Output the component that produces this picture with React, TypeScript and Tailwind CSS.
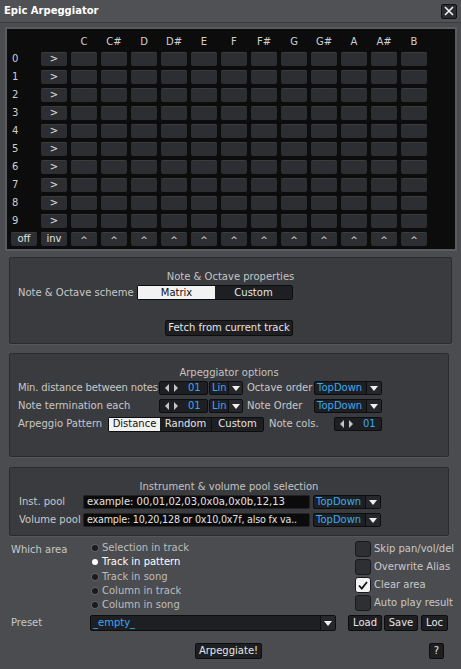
import { ReactNode } from 'react'

const notes = ['C', 'C#', 'D', 'D#', 'E', 'F', 'F#', 'G', 'G#', 'A', 'A#', 'B']
const rows = ['0', '1', '2', '3', '4', '5', '6', '7', '8', '9']

const font = { fontFamily: '"DejaVu Sans", Verdana, sans-serif' }

const btn =
  'flex items-center justify-center rounded-[2px] border border-[#0d0d0e] bg-[#1e1f22] text-[#e6e6e6]'

function Cell({ children }: { children?: ReactNode }) {
  return (
    <div className="flex h-[14px] w-[26px] items-center justify-center rounded-[2px] bg-[#2d2e31] text-[#e0e0e0] shadow-[inset_0_1px_0_#3a3b3e]">
      {children}
    </div>
  )
}

function ArrowLR() {
  return (
    <svg width="14" height="8" viewBox="0 0 14 8" className="mr-[8px]">
      <path d="M4 0 L0 4 L4 8 Z" fill="#c4c4c4" />
      <path d="M9 0 L13 4 L9 8 Z" fill="#c4c4c4" />
    </svg>
  )
}

function Spinner({ w }: { w: string }) {
  return (
    <div className={`${btn} ${w} h-[14px] !justify-start pl-[5px]`}>
      <ArrowLR />
      <span className="pl-[1px] text-[#3aa9ef]">01</span>
    </div>
  )
}

function DownArrow() {
  return (
    <svg width="8" height="5" viewBox="0 0 8 5">
      <path d="M0 0 H8 L4 5 Z" fill="#f0f0f0" />
    </svg>
  )
}

function Dropdown({ text, w, arrowW = 'w-[14px]' }: { text: string; w: string; arrowW?: string }) {
  return (
    <div className={`flex h-[14px] ${w} rounded-[2px] border border-[#0d0d0e] bg-[#1e1f22]`}>
      <div className="flex flex-1 items-center pl-[2px] text-[#3aa9ef]">{text}</div>
      <div className={`flex ${arrowW} items-center justify-center border-l border-[#0d0d0e] bg-[#26272a]`}>
        <DownArrow />
      </div>
    </div>
  )
}

function Panel({ className, title, children }: { className: string; title: string; children: ReactNode }) {
  return (
    <div className={`ml-[9px] rounded-[2px] border border-[#2a2b2e] bg-[#3a3b3f] shadow-[0_1px_0_#56575b] ${className}`}>
      <div className="flex h-[27px] items-end justify-center pb-[3px] text-[#c4c4c4]">{title}</div>
      {children}
    </div>
  )
}

export default function App() {
  return (
    <div className="h-[669px] w-[461px] overflow-hidden whitespace-nowrap bg-[#4b4c50] text-[10px] leading-none text-[#c8c8c8]" style={font}>
      {/* title bar */}
      <div className="flex h-[23px] items-center justify-between border-b border-[#3b3c3f] bg-[#505155] pl-[4px] pr-[4px]">
        <span className="font-bold text-[10px] text-white">Epic Arpeggiator</span>
        <div className="flex h-[15px] w-[16px] items-center justify-center rounded-[2px] border border-[#111] bg-[#2b2c2f]">
          <svg width="10" height="10" viewBox="0 0 10 10">
            <path d="M1 1 L9 9 M9 1 L1 9" stroke="#f4f4f4" strokeWidth="1.6" />
          </svg>
        </div>
      </div>

      {/* note matrix */}
      <div className="ml-[5px] mt-[4px] w-[452px] border-2 border-[#5a5b5f] bg-[#0c0c0c] pb-[3px] pl-[4px]">
        <div className="flex h-[23px] gap-[4px] pb-[5px]">
          <div className="w-[26px]" />
          <div className="w-[26px]" />
          {notes.map((n) => (
            <div key={n} className="flex w-[26px] items-end justify-center text-[#cfcfcf]">
              {n}
            </div>
          ))}
        </div>
        <div className="flex flex-col gap-[4px]">
          {rows.map((r) => (
            <div key={r} className="flex h-[14px] gap-[4px]">
              <div className="flex w-[26px] items-center pl-[1px] text-[#cfcfcf]">{r}</div>
              <Cell>&gt;</Cell>
              {notes.map((n) => (
                <Cell key={n} />
              ))}
            </div>
          ))}
          <div className="flex h-[14px] gap-[4px]">
            <Cell>off</Cell>
            <Cell>inv</Cell>
            {notes.map((n) => (
              <Cell key={n}>
                <span className="pt-[2px] text-[9px]">^</span>
              </Cell>
            ))}
          </div>
        </div>
      </div>

      {/* note & octave */}
      <Panel className="mt-[6px] h-[87px] w-[443px]" title="Note & Octave properties">
        <div className="flex h-[15px] items-center pl-[8px]">
          <div className="w-[119px]">Note &amp; Octave scheme</div>
          <div className="flex h-[15px] w-[156px] rounded-[2px] border border-[#0d0d0e]">
            <div className="flex w-[77px] items-center justify-center bg-[#f2f2f2] text-[#111]">Matrix</div>
            <div className="flex flex-1 items-center justify-center bg-[#1e1f22] text-[#e6e6e6]">Custom</div>
          </div>
        </div>
        <div className="mt-[20px] pl-[155px]">
          <div className={`${btn} h-[16px] w-[128px]`}>Fetch from current track</div>
        </div>
      </Panel>

      {/* arpeggiator options */}
      <Panel className="mt-[9px] h-[104px] w-[440px]" title="Arpeggiator options">
        <div className="flex flex-col gap-[4px] pl-[8px]">
          <div className="flex h-[14px] items-center">
            <div className="w-[141px] tracking-[-0.15px]">Min. distance between notes</div>
            <Spinner w="w-[49px]" />
            <div className="ml-[1px]"><Dropdown text="Lin" w="w-[34px]" /></div>
            <div className="ml-[4px] w-[67px]">Octave order</div>
            <Dropdown text="TopDown" w="w-[68px]" arrowW="w-[15px]" />
          </div>
          <div className="flex h-[14px] items-center">
            <div className="w-[141px]">Note termination each</div>
            <Spinner w="w-[49px]" />
            <div className="ml-[1px]"><Dropdown text="Lin" w="w-[34px]" /></div>
            <div className="ml-[4px] w-[67px]">Note Order</div>
            <Dropdown text="TopDown" w="w-[68px]" arrowW="w-[15px]" />
          </div>
          <div className="flex h-[14px] items-center">
            <div className="w-[90px]">Arpeggio Pattern</div>
            <div className="flex h-[15px] w-[156px] rounded-[2px] border border-[#0d0d0e]">
              <div className="flex w-[51px] items-center justify-center bg-[#f2f2f2] text-[#111]">Distance</div>
              <div className="flex w-[52px] items-center justify-center border-r border-[#0d0d0e] bg-[#1e1f22] text-[#e6e6e6]">Random</div>
              <div className="flex flex-1 items-center justify-center bg-[#1e1f22] text-[#e6e6e6]">Custom</div>
            </div>
            <div className="ml-[5px] w-[65px]">Note cols.</div>
            <Spinner w="w-[48px]" />
          </div>
        </div>
      </Panel>

      {/* pools */}
      <Panel className="mt-[10px] h-[69px] w-[440px]" title="Instrument & volume pool selection">
        <div className="flex flex-col gap-[4px] pl-[9px]">
          <div className="flex h-[14px] items-center">
            <div className="w-[64px]">Inst. pool</div>
            <div className="flex h-[14px] w-[227px] items-center rounded-[2px] border border-[#222] bg-[#0b0b0b] pl-[3px] text-[#e2e2e2]">
              example: 00,01,02,03,0x0a,0x0b,12,13
            </div>
            <div className="ml-[3px]"><Dropdown text="TopDown" w="w-[68px]" arrowW="w-[15px]" /></div>
          </div>
          <div className="flex h-[14px] items-center">
            <div className="w-[64px]">Volume pool</div>
            <div className="flex h-[14px] w-[227px] items-center overflow-hidden rounded-[2px] border border-[#222] bg-[#0b0b0b] pl-[3px] text-[9.6px] tracking-[-0.2px] text-[#e2e2e2]">
              example: 10,20,128 or 0x10,0x7f, also fx va..
            </div>
            <div className="ml-[3px]"><Dropdown text="TopDown" w="w-[68px]" arrowW="w-[15px]" /></div>
          </div>
        </div>
      </Panel>

      {/* which area + options */}
      <div className="mt-[3px] flex">
        <div className="w-[83px] pl-[11px] pt-[6px]">Which area</div>
        <div className="flex w-[262px] flex-col pt-[2px]">
          {['Selection in track', 'Track in pattern', 'Track in song', 'Column in track', 'Column in song'].map((t, i) => (
            <div key={t} className={`flex h-[14.25px] items-center ${i === 1 ? 'text-white' : 'text-[#bdbdbd]'}`}>
              <span
                className={`ml-[9px] mr-[4px] h-[6px] w-[6px] rounded-full ${i === 1 ? 'bg-white' : 'bg-[#1b1b1c] shadow-[0_0_0_1px_#5e5f63]'}`}
              />
              {t}
            </div>
          ))}
        </div>
        <div className="flex flex-col gap-[2px] pt-[2px] pl-[10px]">
          {['Skip pan/vol/del', 'Overwrite Alias', 'Clear area', 'Auto play result'].map((t, i) => (
            <div key={t} className="flex h-[16px] items-center">
              <div
                className={`mr-[3px] flex h-[16px] w-[16px] items-center justify-center rounded-[3px] border border-[#1a1a1b] ${i === 2 ? 'bg-[#f2f2f2]' : 'bg-[#2e2f32]'}`}
              >
                {i === 2 && (
                  <svg width="10" height="9" viewBox="0 0 10 9">
                    <path d="M1 4.5 L3.8 7.5 L9 1" fill="none" stroke="#111" strokeWidth="1.8" />
                  </svg>
                )}
              </div>
              <span className="text-[#c8c8c8]">{t}</span>
            </div>
          ))}
        </div>
      </div>

      {/* preset */}
      <div className="mt-[3px] flex h-[16px] items-center">
        <div className="w-[90px] pl-[11px]">Preset</div>
        <div className="flex h-[16px] w-[246px] rounded-[2px] border border-[#0d0d0e] bg-[#1e1f22]">
          <div className="flex flex-1 items-center pl-[2px] text-[#3aa9ef]">_empty_</div>
          <div className="flex w-[15px] items-center justify-center border-l border-[#0d0d0e] bg-[#26272a]">
            <DownArrow />
          </div>
        </div>
        <div className={`${btn} ml-[12px] h-[16px] w-[34px]`}>Load</div>
        <div className={`${btn} ml-[2px] h-[16px] w-[34px]`}>Save</div>
        <div className={`${btn} ml-[3px] h-[16px] w-[27px]`}>Loc</div>
      </div>

      {/* actions */}
      <div className="mt-[12px] flex h-[16px] items-center">
        <div className={`${btn} ml-[195px] h-[16px] w-[67px]`}>Arpeggiate!</div>
        <div className={`${btn} ml-[167px] h-[16px] w-[15px]`}>?</div>
      </div>
    </div>
  )
}
